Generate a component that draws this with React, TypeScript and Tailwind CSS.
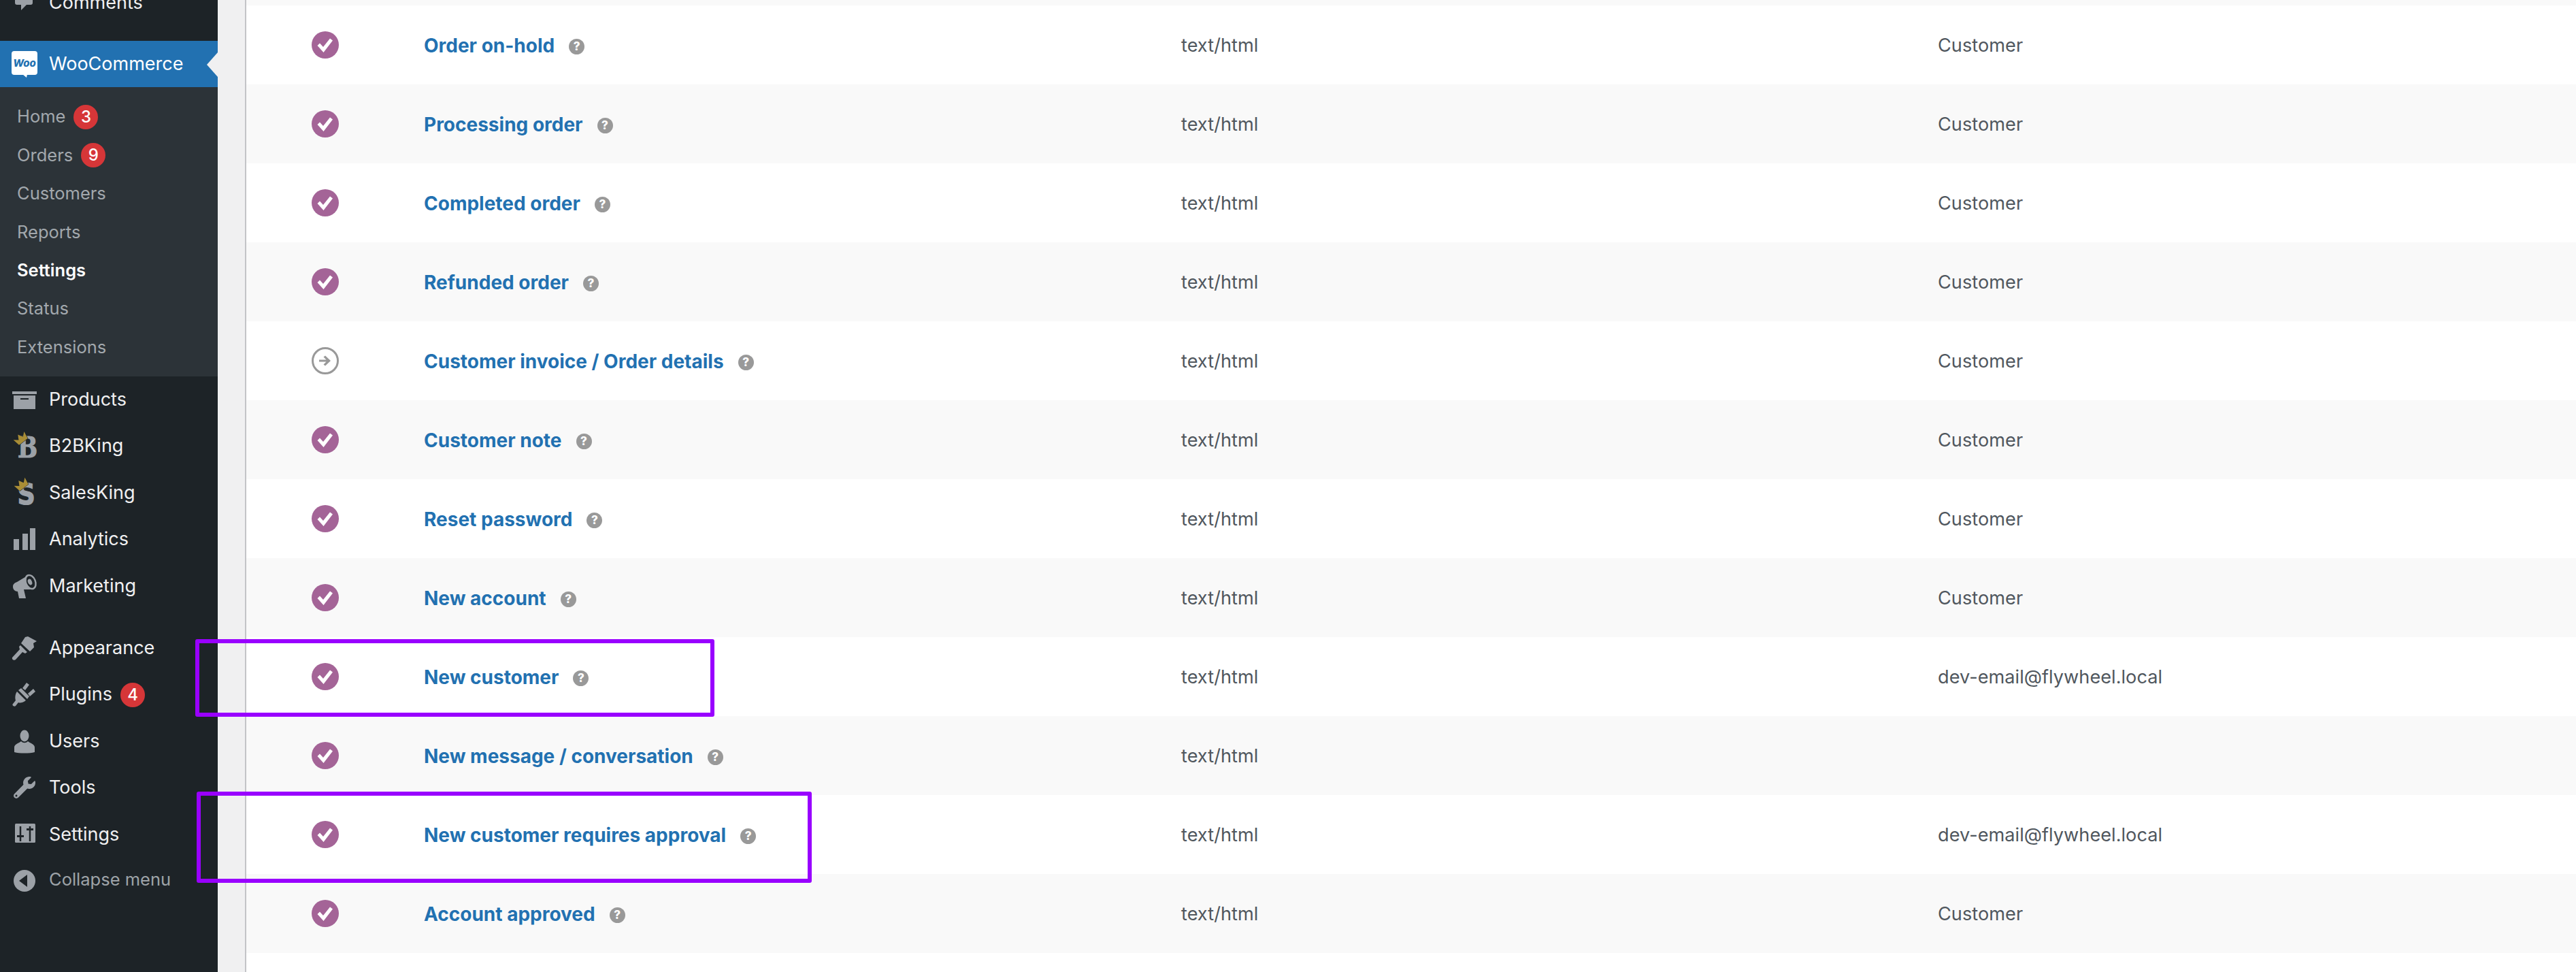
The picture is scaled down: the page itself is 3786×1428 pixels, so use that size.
import { ReactNode } from "react";
import { FaWrench } from "react-icons/fa";

const ICON = "#9ca1a7";

interface MenuItem {
    label: string;
    icon: ReactNode;
    badge?: string;
}

const IconBox = ({ children }: { children: ReactNode }) => (
    <svg width="40" height="40" viewBox="0 0 40 40" className="shrink-0 overflow-visible">
        {children}
    </svg>
);

const Crown = ({ dx, dy }: { dx: number; dy: number }) => (
    <path
        transform={`translate(${dx} ${dy}) rotate(-38)`}
        d="M0 13 L-2 2 L4 7 L8 0 L12 7 L18 2 L16 13 Z"
        fill="#a98d36"
        stroke="#1d2327"
        strokeWidth="1"
        paintOrder="stroke"
    />
);

const ProductsIcon = () => (
    <IconBox>
        <rect x="2" y="8" width="36" height="4" fill={ICON} />
        <path d="M4 14H36V34H4Z M14 18V20H26V18Z" fill={ICON} fillRule="evenodd" />
    </IconBox>
);

const B2BIcon = () => (
    <IconBox>
        <text
            transform="translate(10 36) scale(0.82 1)"
            fontSize="42"
            fontWeight="700"
            fill={ICON}
            stroke={ICON}
            strokeWidth="1.2"
            className="[font-family:'DejaVu_Serif',serif]"
        >
            B
        </text>
        <Crown dx={4} dy={7.5} />
    </IconBox>
);

const SalesIcon = () => (
    <IconBox>
        <text
            transform="translate(9.5 36.5) scale(0.85 1)"
            fontSize="43"
            fontWeight="700"
            fill={ICON}
            stroke={ICON}
            strokeWidth="1.2"
            className="[font-family:'DejaVu_Sans',sans-serif]"
        >
            S
        </text>
        <Crown dx={5} dy={7} />
    </IconBox>
);

const AnalyticsIcon = () => (
    <IconBox>
        <path d="M4 20H12V36H4Z M17 12H25V36H17Z M28 4H36V36H28Z" fill={ICON} />
    </IconBox>
);

const MarketingIcon = () => (
    <IconBox>
        <path
            d="M3 21 C3 17 6 15 9 14 L24 5 C21 11 22 19 29 25 L19 25 L22 38 L12 38 L10 28 C6 28 3 25 3 21 Z"
            fill={ICON}
        />
        <ellipse cx="29" cy="14" rx="7" ry="10.5" transform="rotate(-22 29 14)" fill="none" stroke={ICON} strokeWidth="2.5" />
        <ellipse cx="28" cy="14" rx="3" ry="4.5" transform="rotate(-22 28 14)" fill={ICON} />
    </IconBox>
);

const AppearanceIcon = () => (
    <IconBox>
        <path d="M21 4 L25 3 L38 10 L33 13 L34 19 L28 25 L15 13 Z" fill={ICON} />
        <path d="M14 16 L24 26 L21 28 L17 26 L7 37 C5 39 1 37 2 34 L13 22 L12 18 Z" fill={ICON} />
    </IconBox>
);

const PluginsIcon = () => (
    <IconBox>
        <path d="M9 15 L22 28 C17 32 13 32 11 31 L7 36 C5 38 1 35 3 33 L7 28 C6 25 6 19 9 15 Z" fill={ICON} />
        <path d="M11 13 L24 26 L27 22 L15 10 Z" fill={ICON} />
        <path d="M17 10 L23 2 L27 5 L21 13 Z M25 18 L33 11 L36 15 L28 22 Z" fill={ICON} />
    </IconBox>
);

const UsersIcon = () => (
    <IconBox>
        <ellipse cx="20" cy="12" rx="6.5" ry="8.5" fill={ICON} />
        <path d="M5 29 C5 24 12 23 15 20 C18 23 22 23 25 20 C28 23 35 24 35 29 L35 36 C28 38 12 38 5 36 Z" fill={ICON} />
    </IconBox>
);

const ToolsIcon = () => (
    <div className="flex w-[40px] justify-center text-[#9ca1a7]">
        <FaWrench size={32} />
    </div>
);

const SettingsIcon = () => (
    <IconBox>
        <rect x="6" y="4" width="30" height="28" rx="1.5" fill={ICON} />
        <path d="M14 8V30 M28 8V30" stroke="#1d2327" strokeWidth="2.5" />
        <path d="M9 21H19V24H9Z M23 11H33V14H23Z" fill="#1d2327" />
    </IconBox>
);

const CollapseIcon = () => (
    <IconBox>
        <circle cx="20" cy="20" r="16" fill={ICON} />
        <path d="M12 20 L24 11 V29 Z" fill="#1d2327" />
    </IconBox>
);

const CommentsIcon = () => (
    <IconBox>
        <path d="M9 4 C7 4 6 5 6 7 V20 C6 22 7 23 9 23 H15 V31 L23 23 H29 C31 23 32 22 32 20 V4 Z" fill={ICON} />
    </IconBox>
);

const WooIcon = () => (
    <svg width="40" height="40" viewBox="0 0 40 40" className="shrink-0">
        <rect x="1" y="1" width="38" height="35" rx="4" fill="#fff" />
        <path d="M17 35 L24 35 L23 40 Z" fill="#fff" />
        <text x="20" y="24" textAnchor="middle" fontSize="15" fontWeight="800" fontStyle="italic" fill="#2271b1" className="[font-family:Inter,sans-serif]">
            Woo
        </text>
    </svg>
);

const subItems = [
    { label: "Home", badge: "3" },
    { label: "Orders", badge: "9" },
    { label: "Customers" },
    { label: "Reports" },
    { label: "Settings", current: true },
    { label: "Status" },
    { label: "Extensions" },
];

const topItems: MenuItem[] = [
    { label: "Products", icon: <ProductsIcon /> },
    { label: "B2BKing", icon: <B2BIcon /> },
    { label: "SalesKing", icon: <SalesIcon /> },
    { label: "Analytics", icon: <AnalyticsIcon /> },
    { label: "Marketing", icon: <MarketingIcon /> },
];

const lowerItems: MenuItem[] = [
    { label: "Appearance", icon: <AppearanceIcon /> },
    { label: "Plugins", icon: <PluginsIcon />, badge: "4" },
    { label: "Users", icon: <UsersIcon /> },
    { label: "Tools", icon: <ToolsIcon /> },
    { label: "Settings", icon: <SettingsIcon /> },
];

const CUSTOMER = "Customer";
const DEV_EMAIL = "dev-email@flywheel.local";

const emails = [
    { name: "Order on-hold", to: CUSTOMER },
    { name: "Processing order", to: CUSTOMER },
    { name: "Completed order", to: CUSTOMER },
    { name: "Refunded order", to: CUSTOMER },
    { name: "Customer invoice / Order details", to: CUSTOMER, manual: true },
    { name: "Customer note", to: CUSTOMER },
    { name: "Reset password", to: CUSTOMER },
    { name: "New account", to: CUSTOMER },
    { name: "New customer", to: DEV_EMAIL },
    { name: "New message / conversation", to: "" },
    { name: "New customer requires approval", to: DEV_EMAIL },
    { name: "Account approved", to: CUSTOMER },
];

const Badge = ({ value }: { value: string }) => (
    <span className="ml-[12px] flex h-[36px] w-[36px] items-center justify-center rounded-full bg-[#d63638] text-[24px] font-medium text-white">
        {value}
    </span>
);

const TopItem = ({ item }: { item: MenuItem }) => (
    <div className="flex h-[68.4px] items-center pl-[16px] text-[27px] text-[#f0f0f1]">
        {item.icon}
        <span className="ml-[16px]">{item.label}</span>
        {item.badge && <Badge value={item.badge} />}
    </div>
);

const Sidebar = () => (
    <aside className="flex w-[320px] shrink-0 flex-col bg-[#1d2327]">
        <div className="-mt-[30px] mb-[22px]">
            <TopItem item={{ label: "Comments", icon: <CommentsIcon /> }} />
        </div>

        <div className="relative flex h-[68px] items-center bg-[#2271b1] pl-[16px] text-[27px] text-white">
            <WooIcon />
            <span className="ml-[16px]">WooCommerce</span>
            <span className="absolute right-0 top-[17px] h-0 w-0 border-y-[18px] border-r-[16px] border-y-transparent border-r-[#f0f0f1]" />
        </div>

        <div className="bg-[#2c3338] py-[15px]">
            {subItems.map((sub) => (
                <div
                    key={sub.label}
                    className={`flex h-[56.4px] items-center pl-[25px] text-[25.5px] ${
                        sub.current ? "font-semibold text-white" : "text-[#a2a8ad]"
                    }`}
                >
                    {sub.label}
                    {sub.badge && <Badge value={sub.badge} />}
                </div>
            ))}
        </div>

        {topItems.map((item) => (
            <TopItem key={item.label} item={item} />
        ))}

        <div className="mt-[23px]">
            {lowerItems.map((item) => (
                <TopItem key={item.label} item={item} />
            ))}
        </div>

        <div className="flex h-[68px] items-center pl-[16px] text-[25.5px] text-[#9ea3a8]">
            <CollapseIcon />
            <span className="ml-[16px] -mt-[3px]">Collapse menu</span>
        </div>
    </aside>
);

const StatusIcon = ({ manual }: { manual?: boolean }) =>
    manual ? (
        <svg width="40" height="40" viewBox="0 0 40 40">
            <circle cx="20" cy="20" r="18.5" fill="none" stroke="#999" strokeWidth="3" />
            <path d="M11 18.5H21.5L17.5 14.5L20 12.5L28 20L20 27.5L17.5 25.5L21.5 21.5H11Z" fill="#999" />
        </svg>
    ) : (
        <svg width="40" height="40" viewBox="0 0 40 40">
            <circle cx="20" cy="20" r="20" fill="#a46497" />
            <path d="M8.5 21L12 17.5L17 23L27 10.5L31 13.5L17.5 31Z" fill="#fff" />
        </svg>
    );

const HelpTip = () => (
    <span className="ml-[21px] mt-[5px] flex h-[23px] w-[23px] items-center justify-center rounded-full bg-[#999] text-[17px] font-extrabold leading-none text-white">
        ?
    </span>
);

const EmailTable = () => (
    <div className="min-w-0 flex-1 border-l-2 border-[#c3c4c7] bg-white">
        <div className="h-[8px] bg-[#f9f9f9]" />
        {emails.map((row, i) => (
            <div
                key={row.name}
                className={`grid h-[116px] grid-cols-[261px_1113px_1112px_1fr] items-center text-[27.2px] text-[#50575e] ${
                    i % 2 === 0 ? "bg-white" : "bg-[#f9f9f9]"
                }`}
            >
                <div className="flex pl-[96px]">
                    <StatusIcon manual={row.manual} />
                </div>
                <div className="flex items-center">
                    <a href="#" className="mt-[2px] text-[28px] font-bold text-[#2271b1]">
                        {row.name}
                    </a>
                    <HelpTip />
                </div>
                <div className="mt-[2px]">text/html</div>
                <div className="mt-[2px]">{row.to}</div>
            </div>
        ))}
    </div>
);

export default function App() {
    return (
        <div className="relative flex h-[1428px] w-[3786px] overflow-hidden bg-[#f0f0f1] [font-family:Inter,sans-serif]">
            <Sidebar />
            <main className="flex min-w-0 flex-1 pl-[40px]">
                <EmailTable />
            </main>

            {/* annotation boxes drawn over the screenshot */}
            <div className="absolute left-[287px] top-[939px] h-[114px] w-[763px] rounded-[3px] border-[6px] border-[#9900ff]" />
            <div className="absolute left-[289px] top-[1163px] h-[134px] w-[904px] rounded-[3px] border-[6px] border-[#9900ff]" />
        </div>
    );
}
